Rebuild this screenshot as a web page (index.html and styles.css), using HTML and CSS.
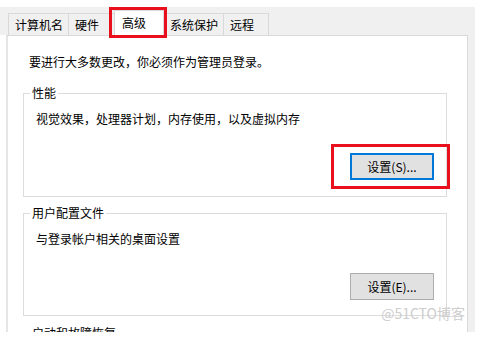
FILE: index.html
```html
<!DOCTYPE html>
<html lang="zh-CN">
<head>
    <meta charset="UTF-8">
    <title>系统属性 - 高级</title>
    <link rel="stylesheet" href="styles.css">
</head>
<body>
    <div class="window">
        <div class="tabbar">
            <div class="tab">计算机名</div>
            <div class="tab">硬件</div>
            <div class="tab selected">高级<span class="mark mark-tab"></span></div>
            <div class="tab">系统保护</div>
            <div class="tab last">远程</div>
        </div>

        <div class="page-row">
            <div class="panel">
                <p class="intro">要进行大多数更改，你必须作为管理员登录。</p>

                <fieldset class="group">
                    <legend>性能</legend>
                    <p class="desc">视觉效果，处理器计划，内存使用，以及虚拟内存</p>
                    <div class="actions">
                        <button class="btn focused">设置(S)...<span class="mark mark-btn"></span></button>
                    </div>
                </fieldset>

                <fieldset class="group second">
                    <legend>用户配置文件</legend>
                    <p class="desc">与登录帐户相关的桌面设置</p>
                    <div class="actions">
                        <button class="btn">设置(E)...</button>
                    </div>
                </fieldset>

                <!-- only the top of this group is in the screenshot -->
                <fieldset class="group third">
                    <legend>启动和故障恢复</legend>
                </fieldset>

                <!-- watermark sits over the group box border -->
                <div class="watermark">@51CTO博客</div>
            </div>
        </div>
    </div>
</body>
</html>
```

FILE: styles.css
```css
body {
    margin: 0;
    background: #fff;
    font-family: "Noto Sans CJK SC", "Noto Sans", sans-serif;
    font-size: 12px;
    line-height: 16px;
    color: #000;
}

.window {
    width: 475px;
    height: 332px;
    overflow: hidden;
    display: flex;
    flex-direction: column;
}

.tabbar {
    margin-top: 7px;
    height: 28px;
    flex: none;
    background: #f0f0f0;
    padding-left: 8px;
    display: flex;
    align-items: flex-end;
}

.tab {
    box-sizing: border-box;
    height: 22px;
    min-width: 46px;
    padding: 0 5px 0 6px;
    border-top: 1px solid #d9d9d9;
    border-left: 1px solid #d9d9d9;
    line-height: 21px;
    background: #f0f0f0;
    white-space: nowrap;
}

.tab.last {
    border-right: 1px solid #d9d9d9;
}

.tab.selected {
    position: relative;
    z-index: 1;
    height: 26px;
    min-width: 50px;
    margin-bottom: -1px;
    padding-left: 7px;
    background: #fff;
    border-right: 1px solid #d9d9d9;
    line-height: 24px;
}

.tab.selected + .tab {
    border-left: none;
}

.mark {
    position: absolute;
    border: 3px solid #e8101c;
    pointer-events: none;
}

.mark-tab {
    left: -6px;
    right: -4px;
    top: -4px;
    bottom: -2px;
}

.page-row {
    flex: 1;
    display: flex;
    background: #f0f0f0;
    border-left: 6px solid #fff;
}

.panel {
    position: relative;
    box-sizing: border-box;
    width: 462px;
    background: #fff;
    border-top: 1px solid #d9d9d9;
    border-left: 2px solid #e6e6e6;
    border-right: 1px solid #d9d9d9;
    padding: 18px 20px 0 15px;
}

.intro {
    margin: 0 0 0 6px;
}

.group {
    margin: 15px 0 0;
    border: 1px solid #dcdcdc;
    padding: 10px 12px 16px;
}

.group.second {
    margin-top: 8px;
    padding-bottom: 15px;
}

.group.third {
    margin-top: 9px;
}

.group legend {
    padding: 0 2px;
    margin-left: -6px;
}

.desc {
    margin: 0;
}

.actions {
    display: flex;
    justify-content: flex-end;
    margin-top: 26px;
}

.btn {
    position: relative;
    box-sizing: border-box;
    width: 84px;
    height: 27px;
    padding: 0;
    background: #e1e1e1;
    border: 1px solid #adadad;
    font: inherit;
    color: #000;
}

.btn.focused {
    border: 2px solid #0078d7;
}

.mark-btn {
    left: -21px;
    right: -18px;
    top: -11px;
    bottom: -11px;
}

.watermark {
    position: absolute;
    right: 2px;
    top: 269px;
    font-size: 14px;
    line-height: 16px;
    color: #cdcdcd;
}
```
